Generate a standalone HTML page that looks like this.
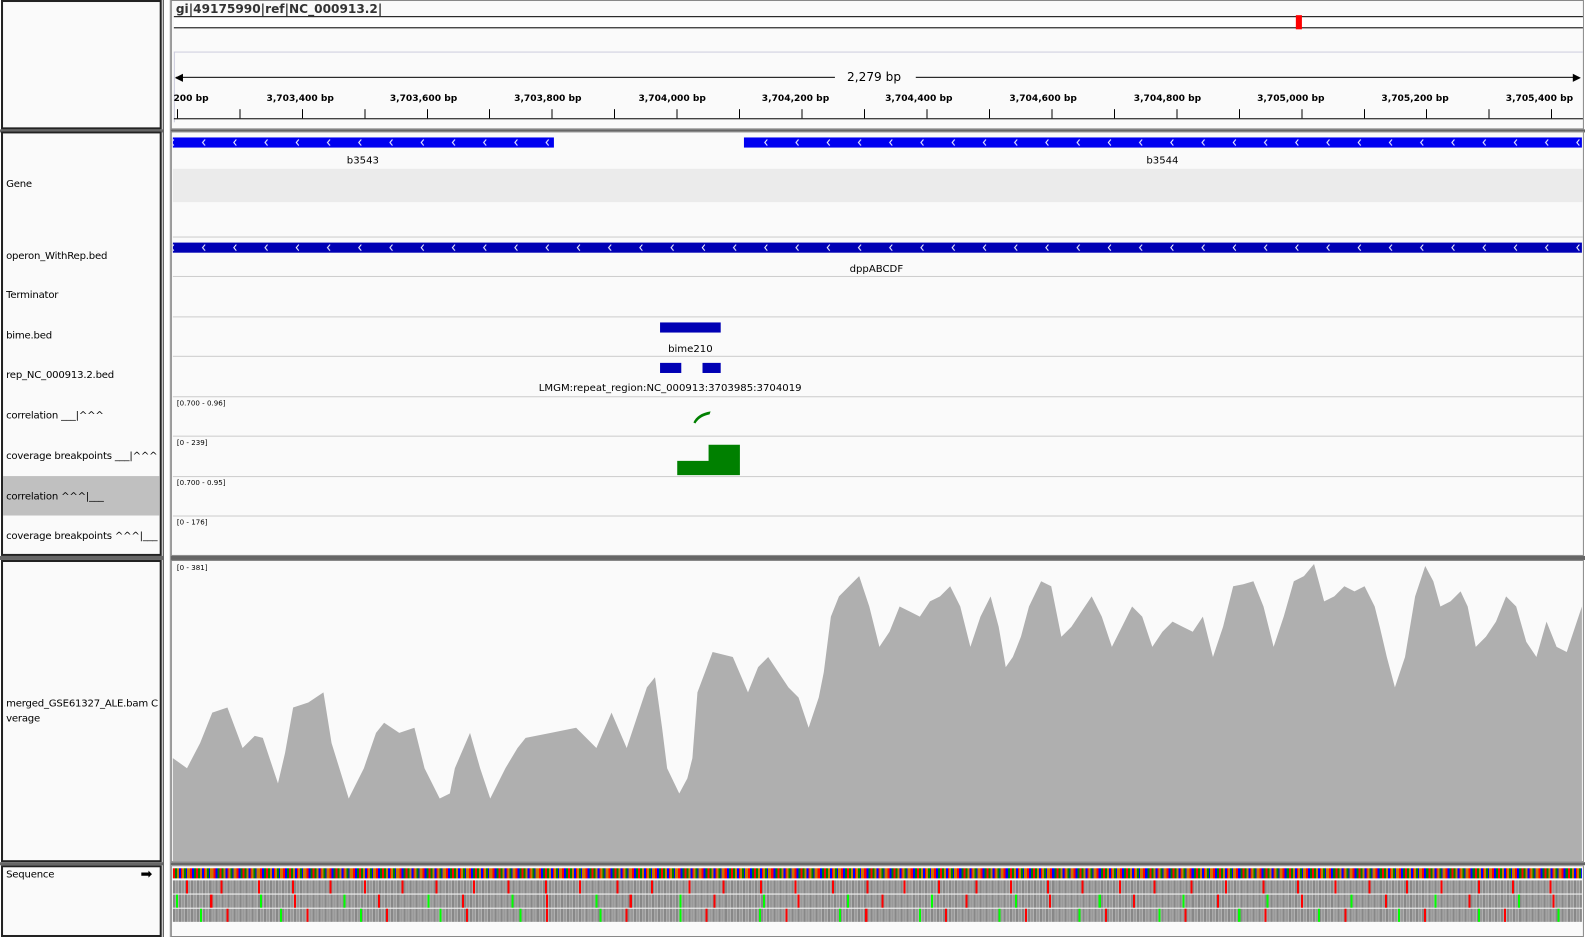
<!DOCTYPE html>
<html><head><meta charset="utf-8"><style>
*{margin:0;padding:0;box-sizing:border-box}
body{width:1585px;height:927px;background:#fff;position:relative;overflow:hidden;font-family:"DejaVu Sans","Liberation Sans",sans-serif;color:#000}
#w{position:absolute;left:0;top:0;width:1568px;height:917px;transform:scale(1.0108);transform-origin:0 0}
.a{position:absolute}
.lp{position:absolute;left:1px;width:159px;background:#fafafa;border:2px solid #222}
.dp{position:absolute;left:169px;width:1398px;background:#fafafa;border:1px solid #888}
.sep{position:absolute;left:161px;width:8px;background:#fff;border-left:1px solid #333;border-right:1px solid #888}
.tn{position:absolute;left:6px;font-size:10px;white-space:nowrap;letter-spacing:-0.2px}
.hl{position:absolute;left:171px;width:1395px;height:1px;background:#ccc}
.rl{position:absolute;font-size:9px;font-weight:bold;white-space:nowrap;transform:translateX(-50%)}
.sm{position:absolute;left:175px;font-size:7px}
.fl{position:absolute;font-size:10px;white-space:nowrap;transform:translateX(-50%)}
</style></head><body><div id="w">
<div class="a" style="left:0;top:128px;width:1585px;height:3px;background:#666"></div>
<div class="a" style="left:0;top:550px;width:1585px;height:4px;background:#666"></div>
<div class="a" style="left:0;top:853px;width:1585px;height:3px;background:#666"></div>

<div class="lp" style="top:0;height:128px"></div>
<div class="lp" style="top:130px;height:420px"></div>
<div class="lp" style="top:554px;height:299px"></div>
<div class="lp" style="top:856px;height:71px"></div>
<div class="sep" style="top:0;height:927px"></div>

<div class="dp" style="top:0;height:128px"></div>
<div class="dp" style="top:130px;height:420px"></div>
<div class="dp" style="top:554px;height:299px"></div>
<div class="dp" style="top:856px;height:71px"></div>

<div class="a" style="left:174px;top:2px;font-size:12px;font-weight:bold;color:#333">gi|49175990|ref|NC_000913.2|</div>
<div class="a" style="left:172px;top:16px;width:1394px;height:12px;background:#fff;border-top:1px solid #000;border-bottom:1px solid #000"></div>
<div class="a" style="left:1282px;top:15px;width:6px;height:14px;background:#f00"></div>
<div class="a" style="left:172px;top:51px;width:1394px;height:1px;background:#ccd"></div>
<div class="a" style="left:172px;top:51px;width:1px;height:70px;background:#ccd"></div>
<div class="a" style="left:174px;top:76px;width:652px;height:1px;background:#000"></div>
<div class="a" style="left:906px;top:76px;width:656px;height:1px;background:#000"></div>
<div class="a" style="left:173px;top:73px;width:0;height:0;border-top:4px solid transparent;border-bottom:4px solid transparent;border-right:8px solid #000"></div>
<div class="a" style="left:1556px;top:73px;width:0;height:0;border-top:4px solid transparent;border-bottom:4px solid transparent;border-left:8px solid #000"></div>
<div class="a" style="left:838px;top:69px;font-size:12px">2,279 bp</div>
<div class="rl" style="left:189px;top:93px">200 bp</div>
<div class="rl" style="left:297px;top:93px">3,703,400 bp</div>
<div class="rl" style="left:419px;top:93px">3,703,600 bp</div>
<div class="rl" style="left:542px;top:93px">3,703,800 bp</div>
<div class="rl" style="left:665px;top:93px">3,704,000 bp</div>
<div class="rl" style="left:787px;top:93px">3,704,200 bp</div>
<div class="rl" style="left:909px;top:93px">3,704,400 bp</div>
<div class="rl" style="left:1032px;top:93px">3,704,600 bp</div>
<div class="rl" style="left:1155px;top:93px">3,704,800 bp</div>
<div class="rl" style="left:1277px;top:93px">3,705,000 bp</div>
<div class="rl" style="left:1400px;top:93px">3,705,200 bp</div>
<div class="rl" style="left:1523px;top:93px">3,705,400 bp</div>
<div class="a" style="left:172px;top:108px;width:1394px;height:9px;background:repeating-linear-gradient(90deg,transparent 0,transparent 3px,#000 3px,#000 4px,transparent 4px,transparent 61.8px)"></div>
<div class="a" style="left:172px;top:117px;width:1394px;height:1px;background:#000"></div>

<svg class="a" style="left:0;top:0" width="1585" height="927">
<defs>
<pattern id="ch1" x="0" y="136" width="30.9" height="10" patternUnits="userSpaceOnUse">
<path d="M17.5 2 L15 5 L17.5 8" stroke="#fff" stroke-width="1" fill="none"/>
</pattern>
<pattern id="ch2" x="0" y="240" width="30.9" height="10" patternUnits="userSpaceOnUse">
<path d="M17.5 2 L15 5 L17.5 8" stroke="#fff" stroke-width="1" fill="none"/>
</pattern>
</defs>
<rect x="171" y="136" width="377" height="10" fill="#0000f0"/>
<rect x="171" y="136" width="377" height="10" fill="url(#ch1)"/>
<rect x="736" y="136" width="829" height="10" fill="#0000f0"/>
<rect x="736" y="136" width="829" height="10" fill="url(#ch1)"/>
<rect x="171" y="240" width="1394" height="10" fill="#0000b4"/>
<rect x="171" y="240" width="1394" height="10" fill="url(#ch2)"/>
<rect x="653" y="319" width="60" height="10" fill="#0000b4"/>
<rect x="653" y="359" width="21" height="10" fill="#0000b4"/>
<rect x="695" y="359" width="18" height="10" fill="#0000b4"/>
<path d="M686 418 Q690 409 703 407 L702 410 Q692 412 688 419 Z" fill="#008000"/>
<path d="M670 470 V456 H701 V440 H732 V470 Z" fill="#008000"/>
<polygon fill="#afafaf" points="171,852 171,750 185,760 198,735 210,705 225,700 240,740 252,728 260,730 275,775 282,745 290,700 305,695 320,685 328,735 345,790 360,760 372,725 380,715 395,725 410,720 420,760 435,790 445,785 450,760 465,725 475,760 485,790 500,760 512,740 520,730 545,725 570,720 590,740 605,705 620,740 630,710 640,680 648,670 655,720 660,760 672,785 680,770 685,750 690,685 705,645 725,650 740,685 750,660 760,650 780,680 790,690 800,720 810,690 815,665 822,610 830,590 840,580 850,570 860,600 870,640 880,625 890,600 900,605 910,610 920,595 930,590 940,580 950,600 960,640 970,610 980,590 988,620 995,660 1002,650 1010,630 1018,600 1030,575 1040,580 1050,630 1060,620 1070,605 1080,590 1090,610 1100,640 1110,620 1120,600 1130,610 1140,640 1150,625 1160,615 1170,620 1180,625 1190,610 1200,650 1210,620 1220,580 1230,578 1240,575 1250,600 1260,640 1270,610 1280,575 1290,570 1300,558 1310,595 1320,590 1330,580 1340,585 1350,580 1360,600 1365,620 1372,650 1380,680 1390,650 1400,590 1410,560 1418,575 1425,600 1435,595 1445,585 1452,600 1460,640 1470,630 1480,615 1490,590 1500,600 1510,635 1520,650 1530,615 1540,640 1550,645 1555,630 1565,600 1565,852"/>
</svg>
<div class="fl" style="left:359px;top:154px">b3543</div>
<div class="fl" style="left:1150px;top:154px">b3544</div>
<div class="a" style="left:171px;top:167px;width:1395px;height:33px;background:#ebebeb"></div>
<div class="hl" style="top:234px"></div>
<div class="fl" style="left:867px;top:261px">dppABCDF</div>
<div class="hl" style="top:273px"></div>
<div class="hl" style="top:313px"></div>
<div class="fl" style="left:683px;top:340px">bime210</div>
<div class="hl" style="top:352px"></div>
<div class="fl" style="left:663px;top:379px">LMGM:repeat_region:NC_000913:3703985:3704019</div>
<div class="hl" style="top:392px"></div>
<div class="hl" style="top:431px"></div>
<div class="hl" style="top:471px"></div>
<div class="hl" style="top:510px"></div>
<div class="sm" style="top:395px">[0.700 - 0.96]</div>
<div class="sm" style="top:434px">[0 - 239]</div>
<div class="sm" style="top:474px">[0.700 - 0.95]</div>
<div class="sm" style="top:513px">[0 - 176]</div>
<div class="sm" style="top:558px">[0 - 381]</div>

<div class="a" style="left:3px;top:471px;width:155px;height:39px;background:#c0c0c0"></div>
<div class="tn" style="top:177px">Gene</div>
<div class="tn" style="top:248px">operon_WithRep.bed</div>
<div class="tn" style="top:287px">Terminator</div>
<div class="tn" style="top:327px">bime.bed</div>
<div class="tn" style="top:366px">rep_NC_000913.2.bed</div>
<div class="tn" style="top:406px">correlation ___|^^^</div>
<div class="tn" style="top:446px">coverage breakpoints ___|^^^</div>
<div class="tn" style="top:486px">correlation ^^^|___</div>
<div class="tn" style="top:525px">coverage breakpoints ^^^|___</div>
<div class="tn" style="top:691px">merged_GSE61327_ALE.bam C</div>
<div class="tn" style="top:706px">verage</div>
<div class="tn" style="top:860px">Sequence</div>
<div class="a" style="left:139px;top:859px;font-size:14px;line-height:12px">&#10145;</div>

<div class="a" style="left:171px;top:859px;width:1394px;height:10px;background:repeating-linear-gradient(90deg,#f00 0 2px,#008000 2px 4px,#c87800 4px 6px,#00f 6px 8px,#f00 8px 9px,#c87800 9px 11px,#008000 11px 13px,#00f 13px 14px,#c87800 14px 17px,#f00 17px 19px,#00f 19px 21px,#008000 21px 23px)"></div>
<div class="a" style="left:171px;top:871px;width:1394px;height:13px;background:repeating-linear-gradient(90deg,transparent 0 13px,#f00 13px 15px,transparent 15px 47px,#f00 47px 49px,transparent 49px 71px),repeating-linear-gradient(90deg,#888 0 2px,#aaa 2px 3px,#999 3px 5px,#b0b0b0 5px 6px)"></div>
<div class="a" style="left:171px;top:885px;width:1394px;height:13px;background:repeating-linear-gradient(90deg,transparent 0 3px,#0f0 3px 5px,transparent 5px 37px,#f00 37px 39px,transparent 39px 83px),repeating-linear-gradient(90deg,#888 0 2px,#aaa 2px 3px,#999 3px 5px,#b0b0b0 5px 6px)"></div>
<div class="a" style="left:171px;top:899px;width:1394px;height:13px;background:repeating-linear-gradient(90deg,transparent 0 27px,#0f0 27px 29px,transparent 29px 53px,#f00 53px 55px,transparent 55px 79px),repeating-linear-gradient(90deg,#888 0 2px,#aaa 2px 3px,#999 3px 5px,#b0b0b0 5px 6px)"></div>
</div></body></html>
